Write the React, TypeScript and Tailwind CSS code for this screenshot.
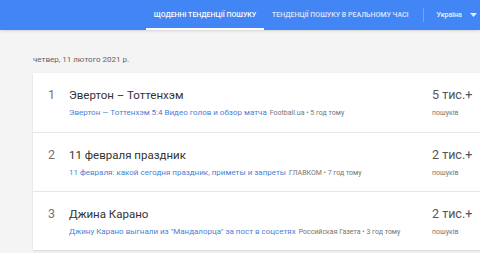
import React from "react";

const rows = [
  {
    n: "1",
    title: "Эвертон – Тоттенхэм",
    link: "Эвертон — Тоттенхэм 5:4 Видео голов и обзор матча",
    src: "Football.ua • 5 год тому",
    vol: "5 тис.+",
  },
  {
    n: "2",
    title: "11 февраля праздник",
    link: "11 февраля: какой сегодня праздник, приметы и запреты",
    src: "ГЛАВКОМ • 7 год тому",
    vol: "2 тис.+",
  },
  {
    n: "3",
    title: "Джина Карано",
    link: "Джину Карано выгнали из \"Мандалорца\" за пост в соцсетях",
    src: "Российская Газета • 3 год тому",
    vol: "2 тис.+",
  },
];

export default function App() {
  return (
    <div
      className="w-[480px] h-[253px] overflow-hidden bg-[#f4f4f4]"
      style={{ fontFamily: "Roboto, 'Noto Sans', sans-serif" }}
    >
      <div className="h-[30px] bg-[#4285f4] flex items-stretch shadow-sm">
        <div className="ml-[146px] w-[118px] flex items-center justify-center text-[7px] font-medium text-white border-b-[2px] border-white pt-[2px]">
          ЩОДЕННІ ТЕНДЕНЦІЇ ПОШУКУ
        </div>
        <div className="ml-[8px] flex items-center text-[7px] font-medium text-white/80">
          ТЕНДЕНЦІЇ ПОШУКУ В РЕАЛЬНОМУ ЧАСІ
        </div>
        <div className="ml-[14px] my-[8px] w-px bg-white/25" />
        <div className="ml-[13px] flex items-center text-[7px] font-medium text-white/90">
          Україна
          <svg className="ml-[8px]" width="7" height="4" viewBox="0 0 7 4">
            <path d="M0 0 L7 0 L3.5 4 Z" fill="rgba(255,255,255,0.85)" />
          </svg>
        </div>
      </div>
      <div className="pl-[33px] pt-[24px] text-[8px] text-[#5f6368] leading-[12px]">
        четвер, 11 лютого 2021 р.
      </div>
      <div className="ml-[33px] mt-[7px] w-[470px] bg-white shadow-[0_1px_2px_rgba(0,0,0,0.12)]">
        {rows.map((r, i) => (
          <div
            key={r.n}
            className={`h-[59px] flex items-start ${i > 0 ? "border-t border-[#e6e6e6]" : ""}`}
          >
            <div className="w-[36px] pl-[15px] pt-[14px] text-[12.5px] text-[#757575] leading-[16px]">
              {r.n}
            </div>
            <div className="w-[363px] pt-[14px]">
              <div className="text-[11.5px] text-[#333] leading-[16px]">{r.title}</div>
              <div className="mt-[5px] text-[8px] leading-[10px] whitespace-nowrap">
                <span className="text-[#4a7fd6]">{r.link}</span>
                <span className="ml-[3px] text-[7px] text-[#757575]">{r.src}</span>
              </div>
            </div>
            <div className="pt-[14px]">
              <div className="text-[12.5px] text-[#555] leading-[16px]">{r.vol}</div>
              <div className="mt-[5px] text-[7px] text-[#757575] leading-[10px]">пошуків</div>
            </div>
          </div>
        ))}
      </div>
    </div>
  );
}
